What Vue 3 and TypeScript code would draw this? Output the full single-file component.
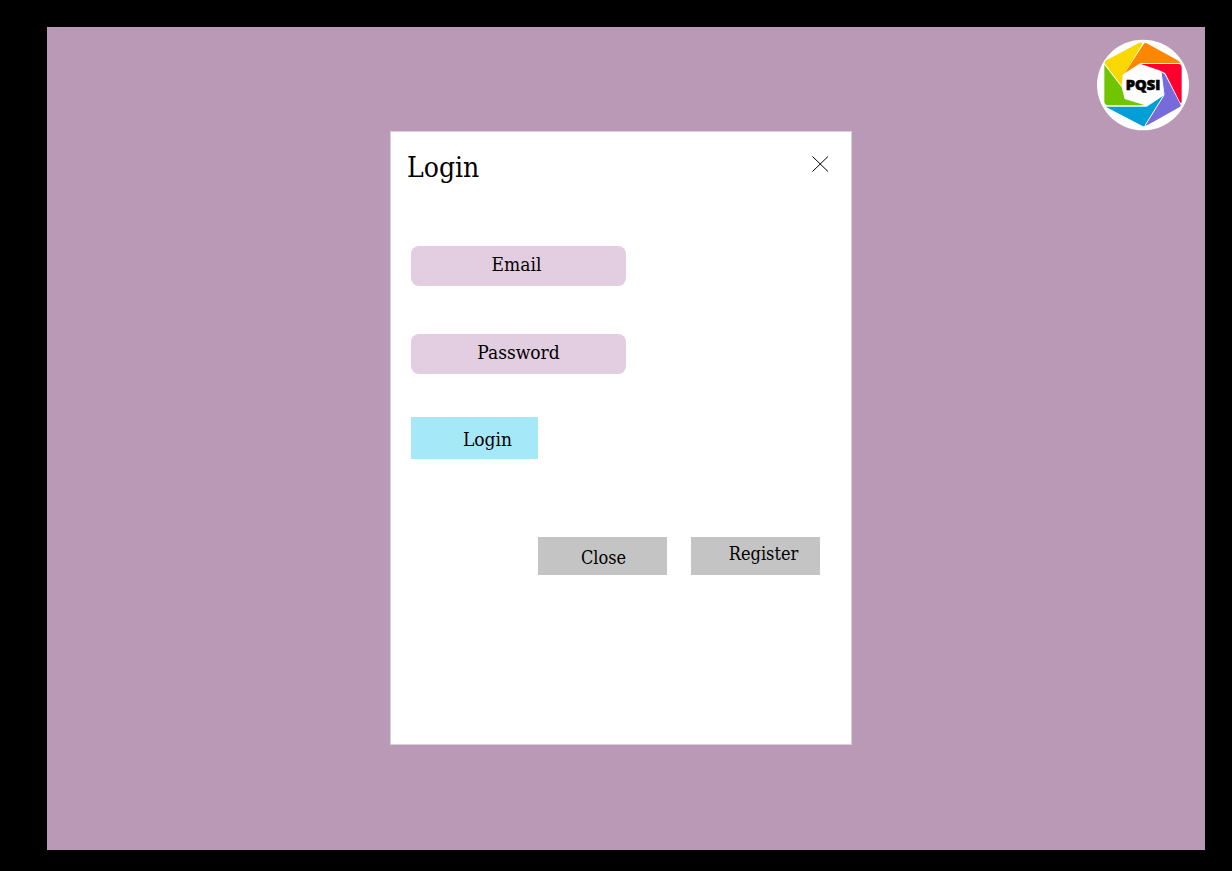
<script setup lang="ts">
import { ref } from 'vue'

const email = ref<string>('')
const password = ref<string>('')
</script>

<template>
  <div class="page">
    <main class="stage">
      <header class="brand">
        <svg class="logo" viewBox="20 18 276 276" role="img" aria-label="PQSI">
          <ellipse cx="158" cy="156" rx="138" ry="136" fill="#fff" />
          <path d="M44 88Q44 84 48 82L144 31Q150 28 154 29Q157 30 155 34L104 119L97 127L94 159L43 91Z" fill="#f9d800" />
          <path d="M160 33Q163 28 169 31L262 82Q267 85 270 90L151 90L103 121Z" fill="#ff8700" />
          <path d="M151 93H267Q274 94 274 102V207Q273 213 269 208L225 121L207 112Z" fill="#ff002e" />
          <path d="M212 117L223 124L271 215Q272 220 267 223L176 274Q166 280 165 275L221 185Z" fill="#776bdc" />
          <path d="M46 221H169L221 187L165 276Q162 282 155 278L53 225Z" fill="#009fd7" />
          <path d="M42 95L94 163L103 198L164 217H50Q43 216 42 208Z" fill="#71c500" />
          <path d="M212 116L221 186L165 276" fill="none" stroke="#fff" stroke-width="3" />
          <text class="logo-text" x="158" y="170" text-anchor="middle">PQSI</text>
        </svg>
      </header>

      <div class="center">
        <form class="dialog" aria-labelledby="dialog-title" @submit.prevent>
          <div class="dialog-head">
            <h1 id="dialog-title">Login</h1>
            <button class="dismiss" type="button" aria-label="Dismiss">
              <svg viewBox="0 0 18 18" aria-hidden="true">
                <path d="M1.5 1.5L17 16.5M17 1.5L1.5 16.5" fill="none" stroke="#000" stroke-width="1" />
              </svg>
            </button>
          </div>
          <div class="fields">
            <input v-model="email" class="field email" type="email" placeholder="Email" aria-label="Email" />
            <input v-model="password" class="field" type="password" placeholder="Password" aria-label="Password" />
          </div>
          <button class="btn login" type="submit">Login</button>
          <div class="actions">
            <button class="btn close" type="button">Close</button>
            <button class="btn register" type="button">Register</button>
          </div>
        </form>
      </div>
    </main>
  </div>
</template>

<style>
body {
  margin: 0;
  background: #000;
}
</style>

<style scoped>
.page {
  box-sizing: border-box;
  display: flex;
  min-height: 100vh;
  padding: 27px 27px 21px 47px;
  background: #000;
  color: #000;
  font-family: "DejaVu Serif Condensed", "Liberation Serif", serif;
}
.stage {
  flex: 1;
  background: #b999b5;
}
.brand {
  display: flex;
  justify-content: flex-end;
  padding: 12px 16px 0 0;
}
.logo {
  display: block;
  width: 92px;
  height: 92px;
}
.logo-text {
  font: 800 44px "Open Sans", "Noto Sans", sans-serif;
  stroke: #000;
  stroke-width: 2px;
}
.center {
  display: flex;
  justify-content: center;
  padding-right: 10px;
}
.dialog {
  box-sizing: border-box;
  width: 462px;
  max-width: 100%;
  min-height: 614px;
  padding: 16px 22px 16px 20px;
  background: #fff;
  border: 1px solid #dccddb;
}
.dialog-head {
  display: flex;
  justify-content: space-between;
  align-items: flex-start;
  margin-left: -4px;
}
h1 {
  margin: 0;
  font-size: 28px;
  line-height: 40px;
  font-weight: 400;
}
.dismiss {
  padding: 7px 0 0;
  border: 0;
  background: none;
}
.dismiss svg {
  display: block;
  width: 18px;
  height: 18px;
}
.fields {
  display: flex;
  flex-direction: column;
  align-items: flex-start;
  gap: 48px;
  margin-top: 58px;
}
.field {
  box-sizing: border-box;
  width: 215px;
  height: 40px;
  padding: 0 0 4px;
  border: 0;
  border-radius: 8px;
  background: #e3cde0;
  font: 19px "DejaVu Serif Condensed", "Liberation Serif", serif;
  text-align: center;
}
.email {
  padding-right: 4px;
}
.field::placeholder {
  color: #000;
  opacity: 1;
}
.btn {
  display: block;
  padding: 0;
  border: 0;
  color: #000;
  font: 18px "DejaVu Serif Condensed", "Liberation Serif", serif;
}
.login {
  width: 127px;
  height: 42px;
  margin-top: 43px;
  padding: 2px 0 0 26px;
  background: #a5e8f8;
  font-size: 19px;
}
.actions {
  display: flex;
  justify-content: flex-end;
  gap: 24px;
  margin: 78px 9px 0 0;
}
.close,
.register {
  width: 129px;
  height: 38px;
  background: #c4c4c4;
}
.close {
  padding: 2px 0 0 2px;
}
.register {
  padding: 0 0 6px 16px;
}
</style>
